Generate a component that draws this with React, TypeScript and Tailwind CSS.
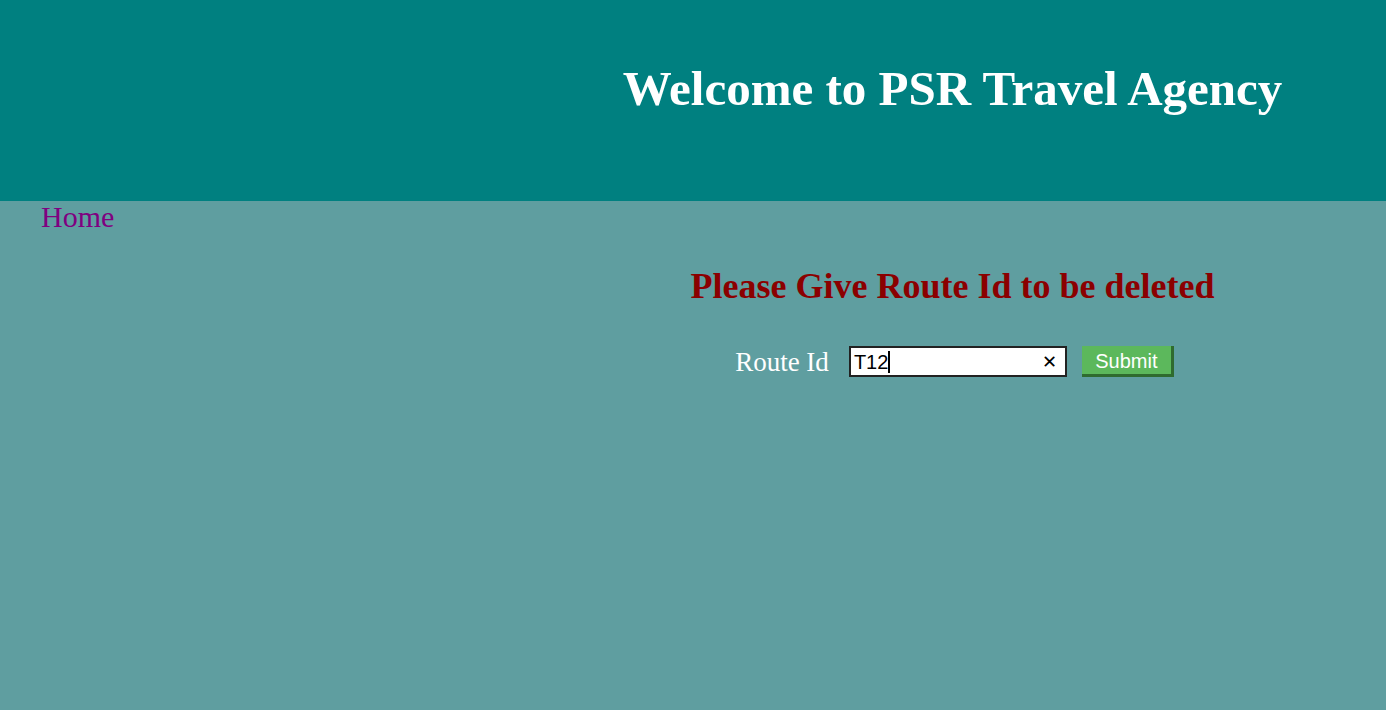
export default function App() {
  return (
    <div className="min-h-[710px] bg-[#5f9ea0] font-['Liberation_Serif',serif]">
      <header className="flex h-[201px] bg-[#008080]">
        <div className="w-[519px]" />
        <div className="flex flex-1 justify-center pt-[58px]">
          <h1 className="text-[49px] font-bold leading-[62px] text-white">Welcome to PSR Travel Agency</h1>
        </div>
      </header>
      <div className="flex">
        <div className="w-[519px] pl-[41px]">
          <a href="#" className="text-[30px] leading-[32px] text-[#800080]">
            Home
          </a>
        </div>
        <div className="flex flex-1 flex-col items-center pt-[64px]">
          <h2 className="text-[36px] font-bold leading-[42px] text-[#8b0000]">Please Give Route Id to be deleted</h2>
          <div className="mt-[39px] ml-[4px] flex items-center">
            <span className="mr-[20px] text-[27px] leading-[30px] text-white">Route Id</span>
            <div className="flex h-[31px] w-[218px] items-center border-2 border-[#222] bg-white pl-[3px] pr-[8px] font-['Liberation_Sans',sans-serif]">
              <span className="text-[20px] leading-[24px] text-black">T12</span>
              <span className="h-[22px] w-[2px] bg-black" />
              <span className="ml-auto text-[18px] leading-[20px] text-black">✕</span>
            </div>
            <button className="ml-[15px] flex h-[31px] w-[92px] items-center justify-center border-r-[3px] border-b-[3px] border-[#2f6b2f] bg-[#5cb85c] pt-[2px] font-['Liberation_Sans',sans-serif] text-[20px] leading-[24px] text-white">
              Submit
            </button>
          </div>
        </div>
      </div>
    </div>
  );
}
